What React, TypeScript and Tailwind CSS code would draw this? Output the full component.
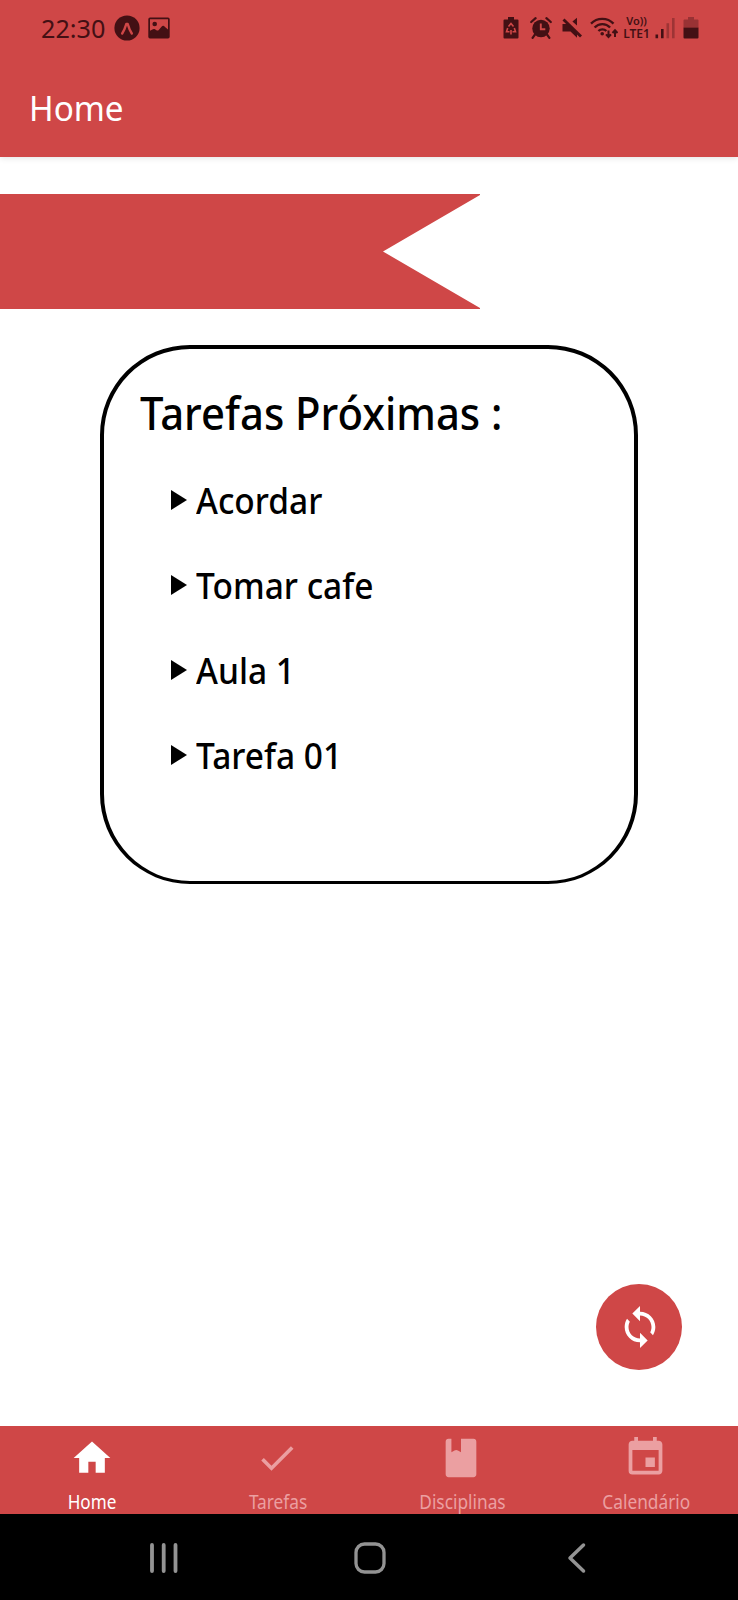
import React from "react";

const tasks = ["Acordar", "Tomar cafe", "Aula 1", "Tarefa 01"];

function StatusBar() {
  return (
    <div className="flex h-[57px] items-center pb-[2px] pl-[41px] text-[#431014]">
      <span className="w-[73px] shrink-0 text-[26px] leading-[54px]">
        <span className="inline-block origin-left scale-x-[0.97]">22:30</span>
      </span>
      <svg className="h-[26px] w-[26px] shrink-0" viewBox="0 0 26 26">
        <circle cx="13" cy="13" r="12.6" fill="currentColor" />
        <path d="M8.200 18.500C10 16 11.400 12 12.300 9h1.400C14.600 12 16 16 17.800 18.500" fill="none" stroke="#cf4747" strokeWidth="2.500" strokeLinecap="round" strokeLinejoin="round" />
      </svg>
      <svg className="ml-2 h-[22px] w-[22px] shrink-0" viewBox="0 0 22 22">
        <path fillRule="evenodd" fill="currentColor" d="M2 .5h18a1.700 1.700 0 0 1 1.700 1.700v17.600a1.700 1.700 0 0 1-1.700 1.700H2a1.700 1.700 0 0 1-1.700-1.700V2.200A1.700 1.700 0 0 1 2 .5zM2 2.300v11.500c1.500-.6 3-2.300 4.500-1.800 1.500.4 2.500 2.300 4 1.300l3-3.600c1.200-1.300 2.400-1 3.500.2l3 2.600V2.300z" />
        <circle cx="6.700" cy="7" r="2.300" fill="currentColor" />
      </svg>

      <svg className="ml-[333px] h-[22px] w-4 shrink-0" viewBox="0 0 16 22">
        <path fill="currentColor" d="M5 0h6v2.500h3.500a1 1 0 0 1 1 1V20.500a1 1 0 0 1-1 1h-13a1 1 0 0 1-1-1v-17a1 1 0 0 1 1-1H5z" />
        <path d="M5.500 9.500 8 6.600l2.500 2.900M11.300 11l1.200 3.800H9.500M6.500 14.800H3.500l1.200-3.800M8 13V17.500" fill="none" stroke="#cf4747" strokeWidth="1.600" />
      </svg>
      <svg className="ml-[11px] h-[22px] w-[22px] shrink-0" viewBox="0 0 22 22">
        <circle cx="11" cy="11.500" r="8.700" fill="currentColor" />
        <path d="M1.200 5 5.600 1.200M20.800 5l-4.400-3.800M5 17.500 2.600 20.800M17 17.500l2.400 3.300" stroke="currentColor" strokeWidth="2.200" strokeLinecap="round" />
        <path d="M10.800 6.500v5.800h4.500" fill="none" stroke="#cf4747" strokeWidth="1.900" />
      </svg>
      <svg className="ml-[10px] h-[22px] w-5 shrink-0" viewBox="0 0 20 22">
        <path fill="currentColor" d="M.5 7h5.200l9.300 9v4.800L8.500 14.500H.5zM15 .8v7.800l-4.600-4.200z" />
        <path d="M1.500 2.500 19 19.500" stroke="currentColor" strokeWidth="2.900" />
      </svg>
      <svg className="ml-2 h-[22px] w-7 shrink-0" viewBox="0 0 28 22">
        <path d="M1 6.600C7 .2 17.500.2 23.500 6.600M4.600 10.500c4.200-4.600 11.300-4.600 15.500 0M8.400 14c2.300-2.300 5.800-2.300 8 0" fill="none" stroke="currentColor" strokeWidth="2.300" />
        <circle cx="12.200" cy="16.800" r="1.800" fill="currentColor" />
        <path d="M18.500 13.500v6M16 17.300l2.500 2.800 2.500-2.800M25 20v-6M22.500 16 25 13.200l2.500 2.800" fill="none" stroke="currentColor" strokeWidth="2" />
      </svg>
      <span className="ml-[5px] flex h-[26px] w-[27px] shrink-0 flex-col items-center font-semibold">
        <span className="whitespace-nowrap text-[11px] leading-[12px]">Vo))</span>
        <span className="whitespace-nowrap text-[12px] leading-[14px]">LTE1</span>
      </span>
      <svg className="ml-[5px] h-[22px] w-5 shrink-0" viewBox="0 0 20 22">
        <path fill="currentColor" d="M.5 17.500h2.600v3.700H.5zM6 12h2.600v9.200H6z" />
        <path fill="currentColor" opacity=".35" d="M11.500 6.300h2.600v14.900h-2.600zM17 1h2.600v20.200H17z" />
      </svg>
      <svg className="ml-2 h-[22px] w-4 shrink-0" viewBox="0 0 16 22">
        <path fill="currentColor" opacity=".38" d="M5 0h6v2.500h3.500a1 1 0 0 1 1 1V10.500H.5v-7a1 1 0 0 1 1-1H5z" />
        <path fill="currentColor" d="M.5 10.500h15V20.500a1 1 0 0 1-1 1h-13a1 1 0 0 1-1-1z" />
      </svg>
    </div>
  );
}

const tabs = [
  { label: "Home", path: "M10 20v-6h4v6h5v-8h3L12 3 2 12h3v8z", size: "h-11 w-11" },
  { label: "Tarefas", path: "M9 16.170 4.830 12l-1.420 1.410L9 19 21 7l-1.410-1.410z", size: "h-11 w-11" },
  {
    label: "Disciplinas",
    path: "M5.500 2H7v7l1.600-.9q.9-.6 1.800 0L12 9V2h6.500C19.400 2 20 2.600 20 3.500v17c0 .9-.6 1.500-1.500 1.500h-13C4.600 22 4 21.400 4 20.500v-17C4 2.600 4.600 2 5.500 2z",
    size: "h-[46px] w-[46px]",
  },
  {
    label: "Calendário",
    path: "M17 12h-5v5h5v-5zM16 1v2H8V1H6v2H5c-1.110 0-1.990.9-1.990 2L3 19a2 2 0 0 0 2 2h14c1.100 0 2-.9 2-2V5c0-1.100-.9-2-2-2h-1V1h-2zm3 18H5V8h14v11z",
    size: "h-[45px] w-[45px]",
  },
];

function TabBar() {
  return (
    <nav className="grid h-[88px] grid-cols-4 bg-[#cf4747]">
      {tabs.map((tab, i) => (
        <div key={tab.label} className={i === 0 ? "flex flex-col items-center text-white" : "flex flex-col items-center text-[#eb9fa1]"}>
          <span className="flex h-[63px] items-center justify-center">
            <svg className={tab.size} viewBox="0 0 24 24" fill="currentColor">
              <path d={tab.path} />
            </svg>
          </span>
          <span className={i === 0 ? "scale-x-[0.9] text-[19px] leading-[26px]" : "ml-[2px] scale-x-[0.91] text-[19px] leading-[26px]"}>
            {tab.label}
          </span>
        </div>
      ))}
    </nav>
  );
}

function SystemBar() {
  return (
    <div className="flex h-[86px] items-center bg-black pl-[149px] pt-[1px] text-[#939393]">
      <svg className="h-8 w-[30px]" viewBox="0 0 30 32" fill="none" stroke="currentColor" strokeWidth="3.800" strokeLinecap="round">
        <path d="M3 3v26M14.700 3v26M26.500 3v26" />
      </svg>
      <svg className="ml-[174px] h-[34px] w-[34px]" viewBox="0 0 34 34" fill="none" stroke="currentColor" strokeWidth="3.300">
        <rect x="3" y="3" width="28" height="28" rx="8.500" />
      </svg>
      <svg className="ml-[179px] h-8 w-5" viewBox="0 0 20 32" fill="none" stroke="currentColor" strokeWidth="3.500" strokeLinecap="round" strokeLinejoin="round">
        <path d="M17.500 3 4 16l13.500 13" />
      </svg>
    </div>
  );
}

export default function App() {
  return (
    <div className="flex h-[1600px] w-[738px] flex-col overflow-hidden bg-white font-['Noto_Sans',sans-serif]">
      <header className="h-[157px] shrink-0 bg-[#cf4747] shadow-[0_1px_6px_rgba(0,0,0,0.12)]">
        <StatusBar />
        <h1 className="pl-[29px] text-[35px] font-normal leading-[102px] text-white">
          <span className="inline-block origin-left scale-x-[0.95]">Home</span>
        </h1>
      </header>

      <main className="flex flex-1 flex-col pt-[37px]">
        <svg className="h-[115px] w-[480px]" viewBox="0 0 480 115">
          <path d="M0 0h480v1L383 57.500l97 56.500v1H0z" fill="#cf4747" />
        </svg>

        <section className="mx-auto mt-9 h-[539px] w-[538px] rounded-[90px] border-4 border-b-[3px] border-black pl-9 text-black">
          <h2 className="mt-9 text-[45px] font-medium leading-[55px]">
            <span className="inline-block origin-left scale-x-[0.93] whitespace-nowrap">Tarefas Próximas :</span>
          </h2>
          <ul className="mt-[17px] pl-[31px]">
            {tasks.map((task) => (
              <li key={task} className="flex h-[85px] items-center">
                <svg className="h-5 w-4" viewBox="0 0 16 20">
                  <path d="M0 0l16 10L0 20z" />
                </svg>
                <span className="ml-[9px] inline-block origin-left scale-x-[0.93] whitespace-nowrap pt-[2px] text-[36px] font-medium leading-[54px]">
                  {task}
                </span>
              </li>
            ))}
          </ul>
        </section>

        <button className="mr-14 mt-auto mb-14 flex h-[86px] w-[86px] items-center justify-center self-end rounded-full bg-[#cf4747] pl-[2px] text-white" aria-label="Atualizar">
          <svg className="h-[46px] w-[46px]" viewBox="0 0 24 24" fill="currentColor">
            <path d="M12 4V1L8 5l4 4V6c3.310 0 6 2.690 6 6 0 1.010-.25 1.970-.7 2.800l1.460 1.460C19.540 15.030 20 13.570 20 12c0-4.420-3.580-8-8-8zm0 14c-3.310 0-6-2.690-6-6 0-1.010.25-1.970.7-2.800L5.240 7.740C4.460 8.970 4 10.430 4 12c0 4.420 3.580 8 8 8v3l4-4-4-4v3z" />
          </svg>
        </button>
      </main>

      <TabBar />
      <SystemBar />
    </div>
  );
}
